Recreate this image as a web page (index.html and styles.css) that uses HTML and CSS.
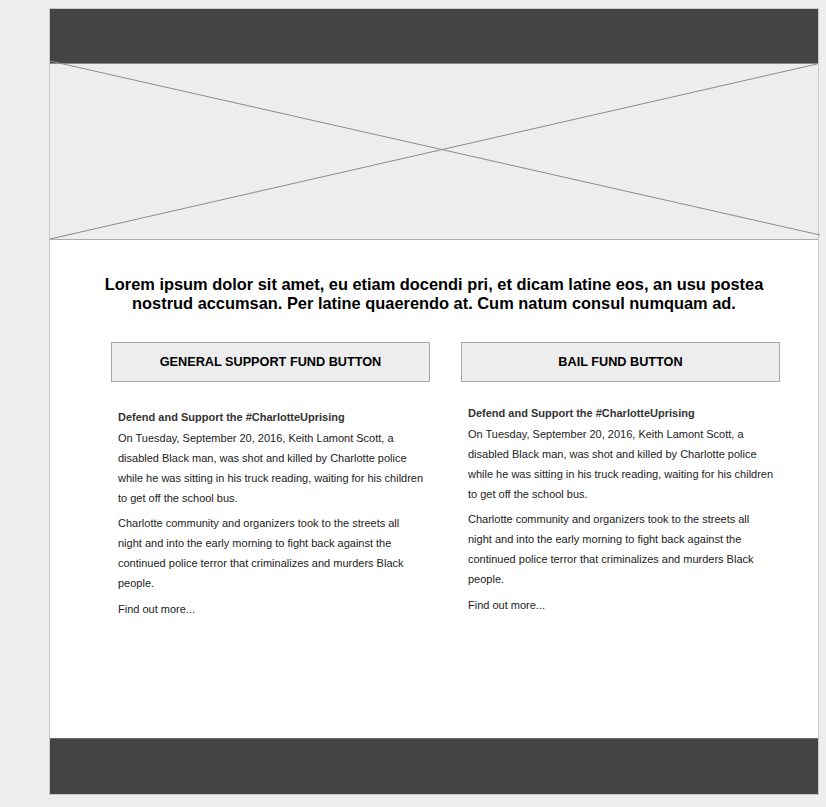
FILE: index.html
```html
<!DOCTYPE html>
<html>
<head>
<meta charset="utf-8">
<link rel="stylesheet" href="styles.css">
</head>
<body>
<div class="page">
  <div class="top"></div>
  <div class="hero">
    <svg class="hero-x" width="768" height="175" viewBox="0 0 768 175">
      <line x1="0" y1="-3" x2="770" y2="171" stroke="#8c8c8c" stroke-width="1"/>
      <line x1="0" y1="175" x2="767" y2="0" stroke="#8c8c8c" stroke-width="1"/>
    </svg>
  </div>
  <div class="main">
    <h1 class="lead">Lorem ipsum dolor sit amet, eu etiam docendi pri, et dicam latine eos, an usu postea nostrud accumsan. Per latine quaerendo at. Cum natum consul numquam ad.</h1>
    <div class="cols">
      <div class="col">
        <div class="btn">GENERAL SUPPORT FUND BUTTON</div>
        <div class="text text-a">
          <p class="title">Defend and Support the #CharlotteUprising</p>
          <p>On Tuesday, September 20, 2016, Keith Lamont Scott, a disabled Black man, was shot and killed by Charlotte police while he was sitting in his truck reading, waiting for his children to get off the school bus.</p>
          <p>Charlotte community and organizers took to the streets all night and into the early morning to fight back against the continued police terror that criminalizes and murders Black people.</p>
          <p class="more">Find out more...</p>
        </div>
      </div>
      <div class="col">
        <div class="btn">BAIL FUND BUTTON</div>
        <div class="text text-b">
          <p class="title">Defend and Support the #CharlotteUprising</p>
          <p>On Tuesday, September 20, 2016, Keith Lamont Scott, a disabled Black man, was shot and killed by Charlotte police while he was sitting in his truck reading, waiting for his children to get off the school bus.</p>
          <p>Charlotte community and organizers took to the streets all night and into the early morning to fight back against the continued police terror that criminalizes and murders Black people.</p>
          <p class="more">Find out more...</p>
        </div>
      </div>
    </div>
  </div>
  <div class="foot"></div>
</div>
</body>
</html>
```
FILE: styles.css
```css
html, body {
  margin: 0;
  padding: 0;
  background: #eeeeee;
  font-family: "Liberation Sans", Arial, sans-serif;
}
.page {
  margin: 8px 0 0 49px;
  width: 768px;
  border: 1px solid #c9c9c9;
  background: #ffffff;
}
.top {
  height: 54px;
  background: #444444;
  border-bottom: 1px solid #8a8a8a;
}
.hero {
  height: 175px;
  background: #ededed;
  border-bottom: 1px solid #acacac;
  overflow: visible;
}
.hero-x {
  display: block;
  overflow: visible;
}
.main {
  height: 498px;
  padding-top: 35px;
  box-sizing: border-box;
}
.lead {
  margin: 0;
  padding: 0 40px;
  font-size: 16.4px;
  line-height: 19px;
  font-weight: bold;
  text-align: center;
  color: #000;
}
.cols {
  display: flex;
  gap: 31px;
  padding-left: 61px;
  margin-top: 29px;
}
.col {
  width: 319px;
}
.btn {
  height: 38px;
  border: 1px solid #a6a6a6;
  background: #ededed;
  display: flex;
  align-items: center;
  justify-content: center;
  font-size: 12.7px;
  font-weight: bold;
  color: #000;
}
.text {
  padding: 0 4px 0 7px;
  font-size: 11px;
  line-height: 20px;
  color: #222;
}
.text-a { padding-top: 25px; }
.text-b { padding-top: 21px; }
.text p {
  margin: 0 0 5px;
}
.text .title {
  font-weight: bold;
  margin: 0 0 1px;
  color: #333;
}
.text .more {
  margin-top: 6px;
}
.foot {
  height: 55px;
  background: #444444;
  border-top: 1px solid #6a6a6a;
}
```
